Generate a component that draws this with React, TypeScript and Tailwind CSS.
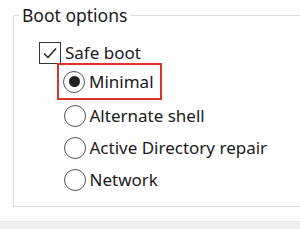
import React from "react";

type RadioProps = {
  label: string;
  checked?: boolean;
};

function Radio({ label, checked }: RadioProps) {
  return (
    <div className="flex items-center gap-[4px]">
      <span className="flex h-[22px] w-[22px] items-center justify-center rounded-full border border-[#555555] bg-white">
        {checked && <span className="h-[11px] w-[11px] rounded-full bg-[#1f1f1f]" />}
      </span>
      <span>{label}</span>
    </div>
  );
}

function App() {
  return (
    <div
      className="flex h-[229px] w-[300px] flex-col overflow-hidden bg-white text-[17px] text-[#1a1a1a]"
      style={{ fontFamily: '"Noto Sans", "Open Sans", sans-serif' }}
    >
      <fieldset className="ml-[13px] mt-[4px] h-[203px] w-[300px] border border-r-0 border-[#dcdcdc] pl-[25px]">
        <legend className="-ml-[20px] px-[3px] text-[17.5px] leading-[23px]">Boot options</legend>
        <div className="mt-[10px] flex h-[32px] items-center gap-[4px]">
          <span className="flex h-[22px] w-[22px] items-center justify-center border border-[#333333] bg-white">
            <svg width="16" height="16" viewBox="0 0 16 16" fill="none">
              <path d="M2 8.5 L6 12.5 L14 3.5" stroke="#222222" strokeWidth="1.5" />
            </svg>
          </span>
          <span>Safe boot</span>
        </div>
        <div className="ml-[18px] flex flex-col">
          <div className="-mt-[6px] flex h-[37px] w-[105px] items-center border-[2.5px] border-[#e0332b] pl-[4px]">
            <Radio label="Minimal" checked />
          </div>
          <div className="flex h-[32px] items-center pl-[6.5px]">
            <Radio label="Alternate shell" />
          </div>
          <div className="flex h-[32px] items-center pl-[6.5px]">
            <Radio label="Active Directory repair" />
          </div>
          <div className="flex h-[32px] items-center pl-[6.5px]">
            <Radio label="Network" />
          </div>
        </div>
      </fieldset>
      <div className="mt-auto h-[8px] border-t border-[#e6e6e6] bg-[#f0f0f0]" />
    </div>
  );
}

export default App;
